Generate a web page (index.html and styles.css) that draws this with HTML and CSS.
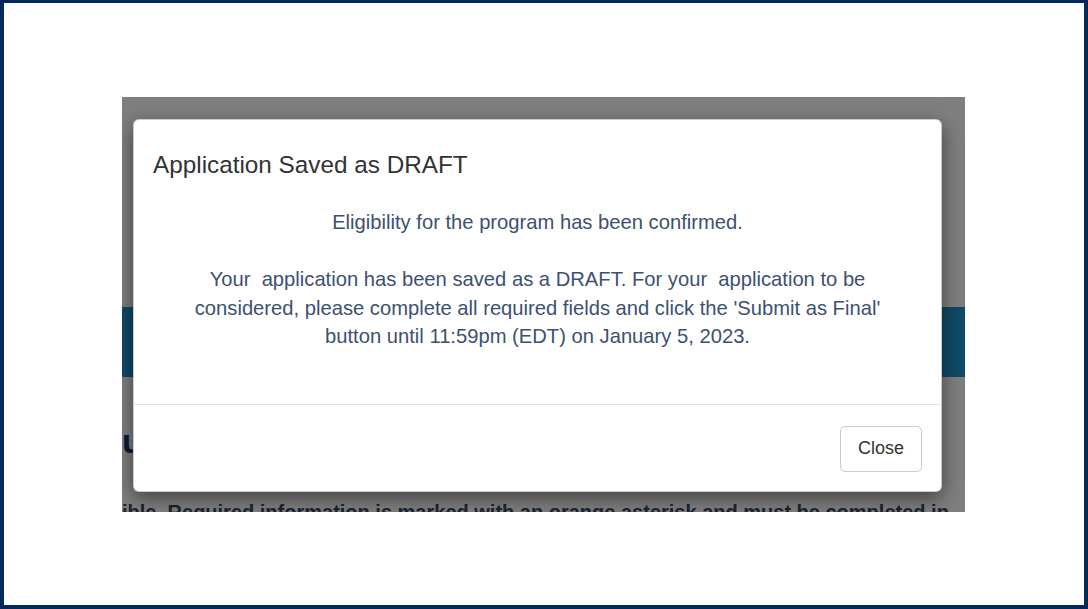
FILE: index.html
```html
<!DOCTYPE html>
<html lang="en">
<head>
    <meta charset="UTF-8">
    <meta name="viewport" content="width=device-width, initial-scale=1.0">
    <title>Application Saved as DRAFT</title>
    <link rel="stylesheet" href="styles.css">
</head>
<body>

    <div class="frame">
        <div class="shot">

            <!-- Page behind the dialog -->
            <div class="page">
                <div class="page-banner"></div>
                <h1 class="page-title">u</h1>
                <p class="page-note">ible. Required information is marked with an orange asterisk and must be completed in</p>
            </div>

            <div class="backdrop"></div>

            <!-- Dialog -->
            <div class="modal">
                <div class="modal-header">
                    <h4>Application Saved as DRAFT</h4>
                </div>
                <div class="modal-body">
                    <p>Eligibility for the program has been confirmed.<br><br>Your&nbsp; application has been saved as a DRAFT. For your&nbsp; application to be considered, please complete all required fields and click the 'Submit as Final' button until 11:59pm (EDT) on January 5, 2023.</p>
                </div>
                <div class="modal-footer">
                    <button class="btn">Close</button>
                </div>
            </div>

        </div>
    </div>

</body>
</html>
```

FILE: styles.css
```css
html, body {
    margin: 0;
    padding: 0;
}

body {
    font-family: "Liberation Sans", Arial, sans-serif;
    background: #fff;
}

.frame {
    width: 1088px;
    height: 609px;
    box-sizing: border-box;
    border: 4px solid #022b5b;
    border-top-width: 3px;
    background: #fff;
    padding: 94px 0 0 118px;
}

.shot {
    position: relative;
    width: 843px;
    height: 415px;
    overflow: hidden;
}

.page {
    background: #fff;
    height: 100%;
    padding-top: 210px;
    box-sizing: border-box;
}

.page-banner {
    height: 70px;
    background: #1e94cc;
}

.page-title {
    margin: 46px 0 0 0;
    font-size: 34px;
    line-height: 1.1;
    font-weight: bold;
    color: #14307a;
}

.page-note {
    margin: 41px 0 0 0;
    font-size: 20px;
    font-weight: bold;
    white-space: nowrap;
    color: #384866;
}

.backdrop {
    position: absolute;
    inset: 0;
    background: rgba(0, 0, 0, 0.5);
}

.modal {
    position: absolute;
    left: 11px;
    top: 22px;
    width: 809px;
    box-sizing: border-box;
    background: #fff;
    border: 1px solid rgba(0, 0, 0, 0.2);
    border-radius: 6px;
    box-shadow: 0 6px 19px rgba(0, 0, 0, 0.5);
}

.modal-header {
    padding: 32px 19px 0 19px;
}

.modal-header h4 {
    margin: 0;
    font-size: 24.3px;
    font-weight: normal;
    line-height: 1.1;
    color: #333;
}

.modal-body {
    padding: 29px 50px 53px 50px;
    text-align: center;
}

.modal-body p {
    margin: 0;
    font-size: 20.2px;
    line-height: 1.42;
    color: #3c5172;
}

.modal-footer {
    border-top: 1px solid #e5e5e5;
    padding: 21px 19px 19px 19px;
    display: flex;
    justify-content: flex-end;
}

.btn {
    font-family: inherit;
    font-size: 18px;
    line-height: 1.42857;
    padding: 9px 17px;
    color: #333;
    background: #fff;
    border: 1px solid #ccc;
    border-radius: 5px;
    cursor: pointer;
}
```
